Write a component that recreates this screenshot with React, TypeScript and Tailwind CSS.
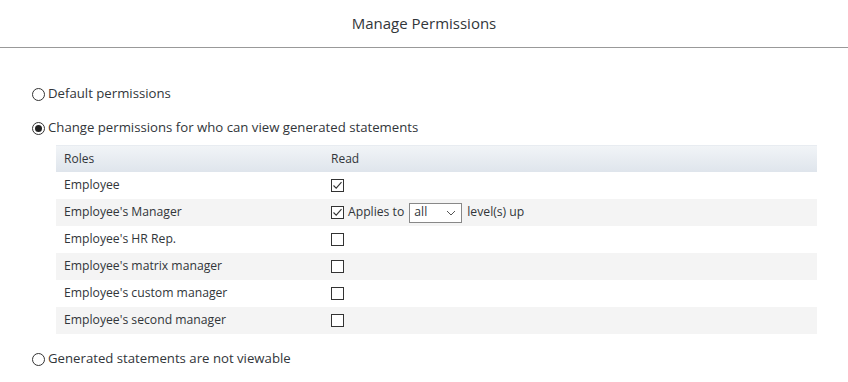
import { useState } from 'react';

// ─── Data ─────────────────────────────────────────────────────────────────────

const ROLES: { label: string; checked: boolean; levels?: boolean }[] = [
  { label: 'Employee', checked: true },
  { label: "Employee's Manager", checked: true, levels: true },
  { label: "Employee's HR Rep.", checked: false },
  { label: "Employee's matrix manager", checked: false },
  { label: "Employee's custom manager", checked: false },
  { label: "Employee's second manager", checked: false },
];

// ─── Small controls ───────────────────────────────────────────────────────────

const Radio = ({ on }: { on: boolean }) => (
  <span className="w-[13px] h-[13px] rounded-full border border-[#333] bg-white flex items-center justify-center shrink-0">
    {on && <span className="w-[7px] h-[7px] rounded-full bg-[#222]" />}
  </span>
);

const Check = ({ on }: { on: boolean }) => (
  <span className="w-[13px] h-[13px] border border-[#333] bg-white flex items-center justify-center shrink-0">
    {on && (
      <svg width="11" height="11" viewBox="0 0 11 11" fill="none">
        <path d="M1.5 5.5 L4.2 8.2 L9.5 2.2" stroke="#333" strokeWidth="1.1" />
      </svg>
    )}
  </span>
);

// ─── Main component ───────────────────────────────────────────────────────────

export default function App() {
  const [mode, setMode] = useState<'default' | 'change' | 'none'>('change');

  const option = (key: typeof mode, label: string) => (
    <label className="flex items-center gap-[3px] cursor-pointer" onClick={() => setMode(key)}>
      <Radio on={mode === key} />
      <span>{label}</span>
    </label>
  );

  return (
    <div className="w-[848px] h-[382px] bg-white text-[#32363a] text-[13.2px] font-['Open_Sans','Noto_Sans',sans-serif] overflow-hidden">
      {/* Header */}
      <div className="h-[48px] border-b border-[#999] flex items-center justify-center">
        <h1 className="text-[15px] text-[#32363a] pb-[1px]">Manage Permissions</h1>
      </div>

      <div className="pl-[32px] pr-[31px] pt-[37px]">
        <div className="h-[18px] flex items-center">{option('default', 'Default permissions')}</div>

        <div className="h-[18px] flex items-center mt-[16px]">
          {option('change', 'Change permissions for who can view generated statements')}
        </div>

        {/* Roles table */}
        <div className="ml-[24px] mt-[8px] text-[12.2px]">
          <div className="h-[27px] flex items-center bg-gradient-to-b from-[#f1f4f7] to-[#dfe5ec] border-t border-[#e8ecf1] text-[12px]">
            <div className="w-[275px] pl-[8px]">Roles</div>
            <div>Read</div>
          </div>
          {ROLES.map((r, i) => (
            <div
              key={r.label}
              className={`h-[27px] flex items-center ${i % 2 === 1 ? 'bg-[#f4f4f4]' : 'bg-white'}`}
            >
              <div className="w-[275px] pl-[8px]">{r.label}</div>
              <div className="flex items-center">
                <Check on={r.checked} />
                {r.levels && (
                  <>
                    <span className="ml-[4px]">Applies to</span>
                    <span className="ml-[5px] w-[53px] h-[20px] border border-[#888] bg-white flex items-center justify-between pl-[4px] pr-[5px]">
                      <span>all</span>
                      <svg width="10" height="6" viewBox="0 0 10 6" fill="none">
                        <path d="M1 1 L5 5 L9 1" stroke="#555" strokeWidth="1" />
                      </svg>
                    </span>
                    <span className="ml-[5px]">level(s) up</span>
                  </>
                )}
              </div>
            </div>
          ))}
        </div>

        <div className="h-[18px] flex items-center mt-[16px]">
          {option('none', 'Generated statements are not viewable')}
        </div>
      </div>
    </div>
  );
}
